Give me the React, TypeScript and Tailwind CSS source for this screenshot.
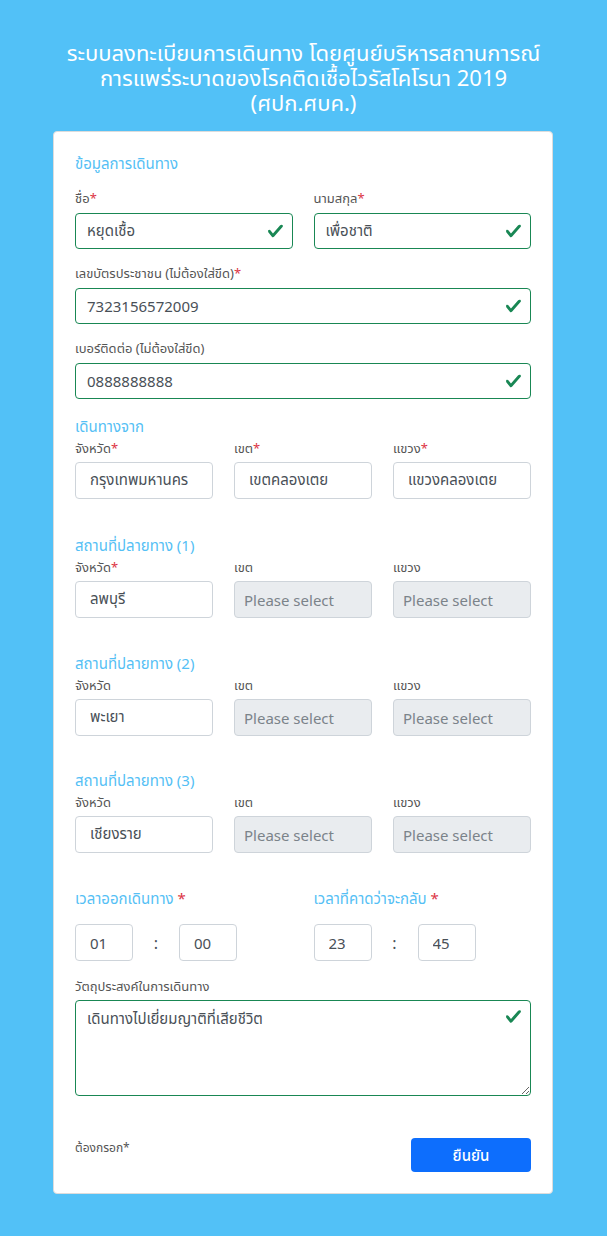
import React from "react";

const font = { fontFamily: '"Noto Sans", "Noto Sans Thai", Lato, sans-serif' };

function Check() {
  return (
    <svg viewBox="0 0 8 8" className="absolute right-[9px] top-1/2 -translate-y-1/2 w-[17px] h-[17px]">
      <path fill="#198754" d="M2.3 6.73.6 4.53c-.4-1.04.46-1.4 1.1-.8l1.1 1.4 3.4-3.8c.6-.63 1.6-.27 1.2.7l-4 4.6c-.43.5-.8.4-1.1.1z" />
    </svg>
  );
}

function Label({ text, req }: { text: string; req?: boolean }) {
  return (
    <div className="text-[13px] leading-[20px] text-[#555] mb-[5px]">
      {text}
      {req && <span className="text-[#dc3545]">*</span>}
    </div>
  );
}

function ValidInput({ value }: { value: string }) {
  return (
    <div className="relative">
      <input
        readOnly
        value={value}
        className="w-full h-[36px] rounded-[4px] border border-[#198754] bg-white pl-[11px] pr-[36px] text-[15px] text-[#495057] outline-none"
        style={font}
      />
      <Check />
    </div>
  );
}

function PlainInput({ value, disabled }: { value: string; disabled?: boolean }) {
  return (
    <input
      readOnly
      placeholder={disabled ? "Please select" : undefined}
      value={disabled ? "" : value}
      className={
        "w-full h-[37px] rounded-[4px] border border-[#ced4da] text-[15px] text-[#495057] outline-none placeholder:text-[#7b838a] " +
        (disabled ? "bg-[#e9ecef] px-[9px]" : "bg-white pl-[14px] pr-[8px]")
      }
      style={font}
    />
  );
}

function Heading({ text, className = "" }: { text: string; className?: string }) {
  return <div className={"text-[15px] leading-[22px] text-[#55bff5] " + className}>{text}</div>;
}

function Trio({
  title,
  vals,
  reqs,
  disabledRest,
  className = "",
}: {
  title: string;
  vals: string[];
  reqs: boolean[];
  disabledRest?: boolean;
  className?: string;
}) {
  const labels = ["จังหวัด", "เขต", "แขวง"];
  return (
    <div className={className}>
      <Heading text={title} />
      <div className="grid grid-cols-3 gap-x-[21px] mt-[1px]">
        {labels.map((l, i) => (
          <div key={l}>
            <div className="text-[13px] leading-[20px] text-[#555] mb-[4px]">
              {l}
              {reqs[i] && <span className="text-[#dc3545]">*</span>}
            </div>
            <PlainInput value={vals[i]} disabled={disabledRest && i > 0} />
          </div>
        ))}
      </div>
    </div>
  );
}

function TimeBox({ v }: { v: string }) {
  return (
    <input
      readOnly
      value={v}
      className="w-[58px] h-[37px] rounded-[4px] border border-[#ced4da] bg-white px-[14px] text-[15px] text-[#495057] outline-none"
      style={font}
    />
  );
}

export default function App() {
  return (
    <div className="min-h-[1236px] bg-[#52c1f7] pt-[40px]" style={font}>
      <h1 className="text-white text-[22px] leading-[25px] text-center font-normal px-[20px]">
        ระบบลงทะเบียนการเดินทาง โดยศูนย์บริหารสถานการณ์
        <br />
        การแพร่ระบาดของโรคติดเชื้อไวรัสโคโรนา 2019
        <br />
        (ศปก.ศบค.)
      </h1>
      <div className="ml-[53px] mr-[54px] mt-[16px] bg-white rounded-[4px] border border-[#dcdcdc] px-[21px] pt-[20px] pb-[21px]">
        <Heading text="ข้อมูลการเดินทาง" />
        <div className="grid grid-cols-2 gap-x-[21px] mt-[14px]">
          <div>
            <Label text="ชื่อ" req />
            <ValidInput value="หยุดเชื้อ" />
          </div>
          <div>
            <Label text="นามสกุล" req />
            <ValidInput value="เพื่อชาติ" />
          </div>
        </div>
        <div className="mt-[14px]">
          <Label text="เลขบัตรประชาชน (ไม่ต้องใส่ขีด)" req />
          <ValidInput value="7323156572009" />
        </div>
        <div className="mt-[14px]">
          <Label text="เบอร์ติดต่อ (ไม่ต้องใส่ขีด)" />
          <ValidInput value="0888888888" />
        </div>
        <Trio
          className="mt-[16px]"
          title="เดินทางจาก"
          vals={["กรุงเทพมหานคร", "เขตคลองเตย", "แขวงคลองเตย"]}
          reqs={[true, true, true]}
        />
        <Trio className="mt-[35px]" title="สถานที่ปลายทาง (1)" vals={["ลพบุรี", "", ""]} reqs={[true, false, false]} disabledRest />
        <Trio className="mt-[34px]" title="สถานที่ปลายทาง (2)" vals={["พะเยา", "", ""]} reqs={[false, false, false]} disabledRest />
        <Trio className="mt-[33px]" title="สถานที่ปลายทาง (3)" vals={["เชียงราย", "", ""]} reqs={[false, false, false]} disabledRest />
        <div className="grid grid-cols-2 gap-x-[21px] mt-[34px]">
          {[
            { t: "เวลาออกเดินทาง", a: "01", b: "00" },
            { t: "เวลาที่คาดว่าจะกลับ", a: "23", b: "45" },
          ].map((g) => (
            <div key={g.t}>
              <div className="text-[15px] leading-[22px] text-[#55bff5]">
                {g.t} <span className="text-[#dc3545]">*</span>
              </div>
              <div className="flex items-center mt-[15px]">
                <TimeBox v={g.a} />
                <span className="w-[46px] text-center text-[16px] text-[#495057]">:</span>
                <TimeBox v={g.b} />
              </div>
            </div>
          ))}
        </div>
        <div className="mt-[15px]">
          <div className="text-[13px] leading-[20px] text-[#555] mb-[4px]">วัตถุประสงค์ในการเดินทาง</div>
          <div className="relative">
            <textarea
              readOnly
              value="เดินทางไปเยี่ยมญาติที่เสียชีวิต"
              className="block w-full h-[96px] rounded-[4px] border border-[#198754] bg-white pl-[11px] pr-[36px] pt-[6px] text-[15px] leading-[22px] text-[#495057] outline-none"
              style={font}
            />
            <svg viewBox="0 0 8 8" className="absolute right-[9px] top-[8px] w-[17px] h-[17px]">
              <path fill="#198754" d="M2.3 6.73.6 4.53c-.4-1.04.46-1.4 1.1-.8l1.1 1.4 3.4-3.8c.6-.63 1.6-.27 1.2.7l-4 4.6c-.43.5-.8.4-1.1.1z" />
            </svg>
          </div>
        </div>
        <div className="flex justify-between items-start mt-[42px]">
          <div className="text-[12px] leading-[18px] text-[#555] mt-[1px]">ต้องกรอก*</div>
          <button className="w-[120px] h-[34px] rounded-[4px] bg-[#0d6efd] text-white text-[15px] font-medium">
            ยืนยัน
          </button>
        </div>
      </div>
    </div>
  );
}
